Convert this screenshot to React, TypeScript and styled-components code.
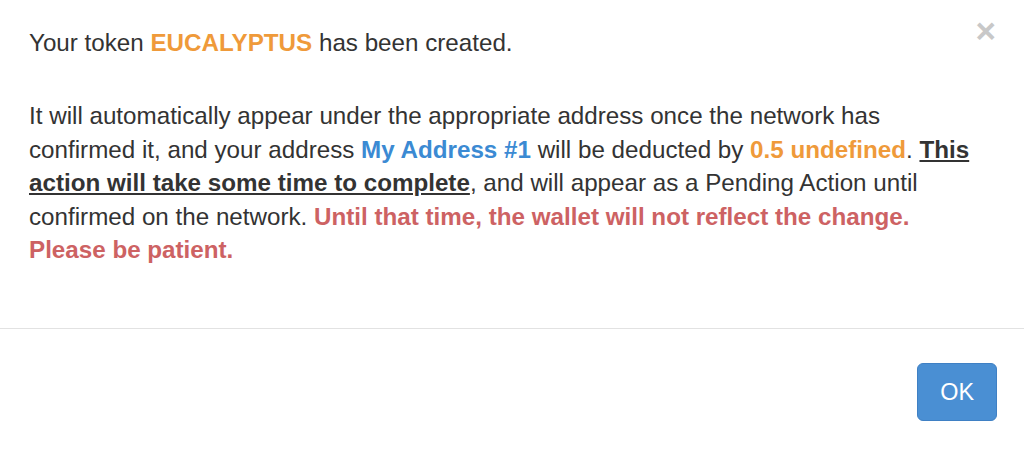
import styled, { createGlobalStyle } from 'styled-components';

const GlobalStyle = createGlobalStyle`
  html, body {
    margin: 0;
    padding: 0;
    background: #fff;
  }
  body {
    font-family: "Liberation Sans", Arial, sans-serif;
    color: #333;
  }
`;

const App = () => {
  return (
    <>
      <GlobalStyle />
      <Modal>
        <CloseButton aria-label="close">×</CloseButton>
        <ModalBody>
          <Lead>
            Your token <Highlight tone="orange">EUCALYPTUS</Highlight> has been created.
          </Lead>
          <Paragraph>
            It will automatically appear under the appropriate address once the network has
            confirmed it, and your address <Highlight tone="blue">My Address #1</Highlight> will be
            deducted by <Highlight tone="orange">0.5 undefined</Highlight>.{' '}
            <Underlined>This action will take some time to complete</Underlined>, and will appear as
            a Pending Action until confirmed on the network.{' '}
            <Highlight tone="red">
              Until that time, the wallet will not reflect the change. Please be patient.
            </Highlight>
          </Paragraph>
        </ModalBody>
        <ModalFooter>
          <PrimaryButton>OK</PrimaryButton>
        </ModalFooter>
      </Modal>
    </>
  );
};

export default App;

const tones = {
  orange: '#ef9a3a',
  blue: '#3b8ad3',
  red: '#cd6263',
};

const Modal = styled.div`
  position: relative;
  width: 1024px;
  height: 451px;
  background: #fff;
`;

const CloseButton = styled.button`
  position: absolute;
  top: 13px;
  right: 28px;
  border: 0;
  background: none;
  padding: 0;
  font-family: "Liberation Sans", Arial, sans-serif;
  font-size: 35px;
  font-weight: bold;
  line-height: 1;
  color: #c8c8c8;
  cursor: pointer;
`;

const ModalBody = styled.div`
  padding: 26px 32px 45px 29px;
  font-size: 24.2px;
  line-height: 33.4px;
`;

const Lead = styled.p`
  margin: 0 0 40px;
`;

const Paragraph = styled.p`
  margin: 0 0 17px;
`;

const Highlight = styled.b<{ tone: keyof typeof tones }>`
  font-weight: bold;
  color: ${(p) => tones[p.tone]};
`;

const Underlined = styled.b`
  font-weight: bold;
  text-decoration: underline;
`;

const ModalFooter = styled.div`
  display: flex;
  justify-content: flex-end;
  padding: 34px 27px 25px;
  border-top: 1px solid #e2e2e2;
`;

const PrimaryButton = styled.button`
  height: 58px;
  padding: 0 22px;
  border: 1px solid #3f80c4;
  border-radius: 6px;
  background: #4a8fd3;
  color: #fff;
  font-family: "Liberation Sans", Arial, sans-serif;
  font-size: 23.4px;
  cursor: pointer;
`;
